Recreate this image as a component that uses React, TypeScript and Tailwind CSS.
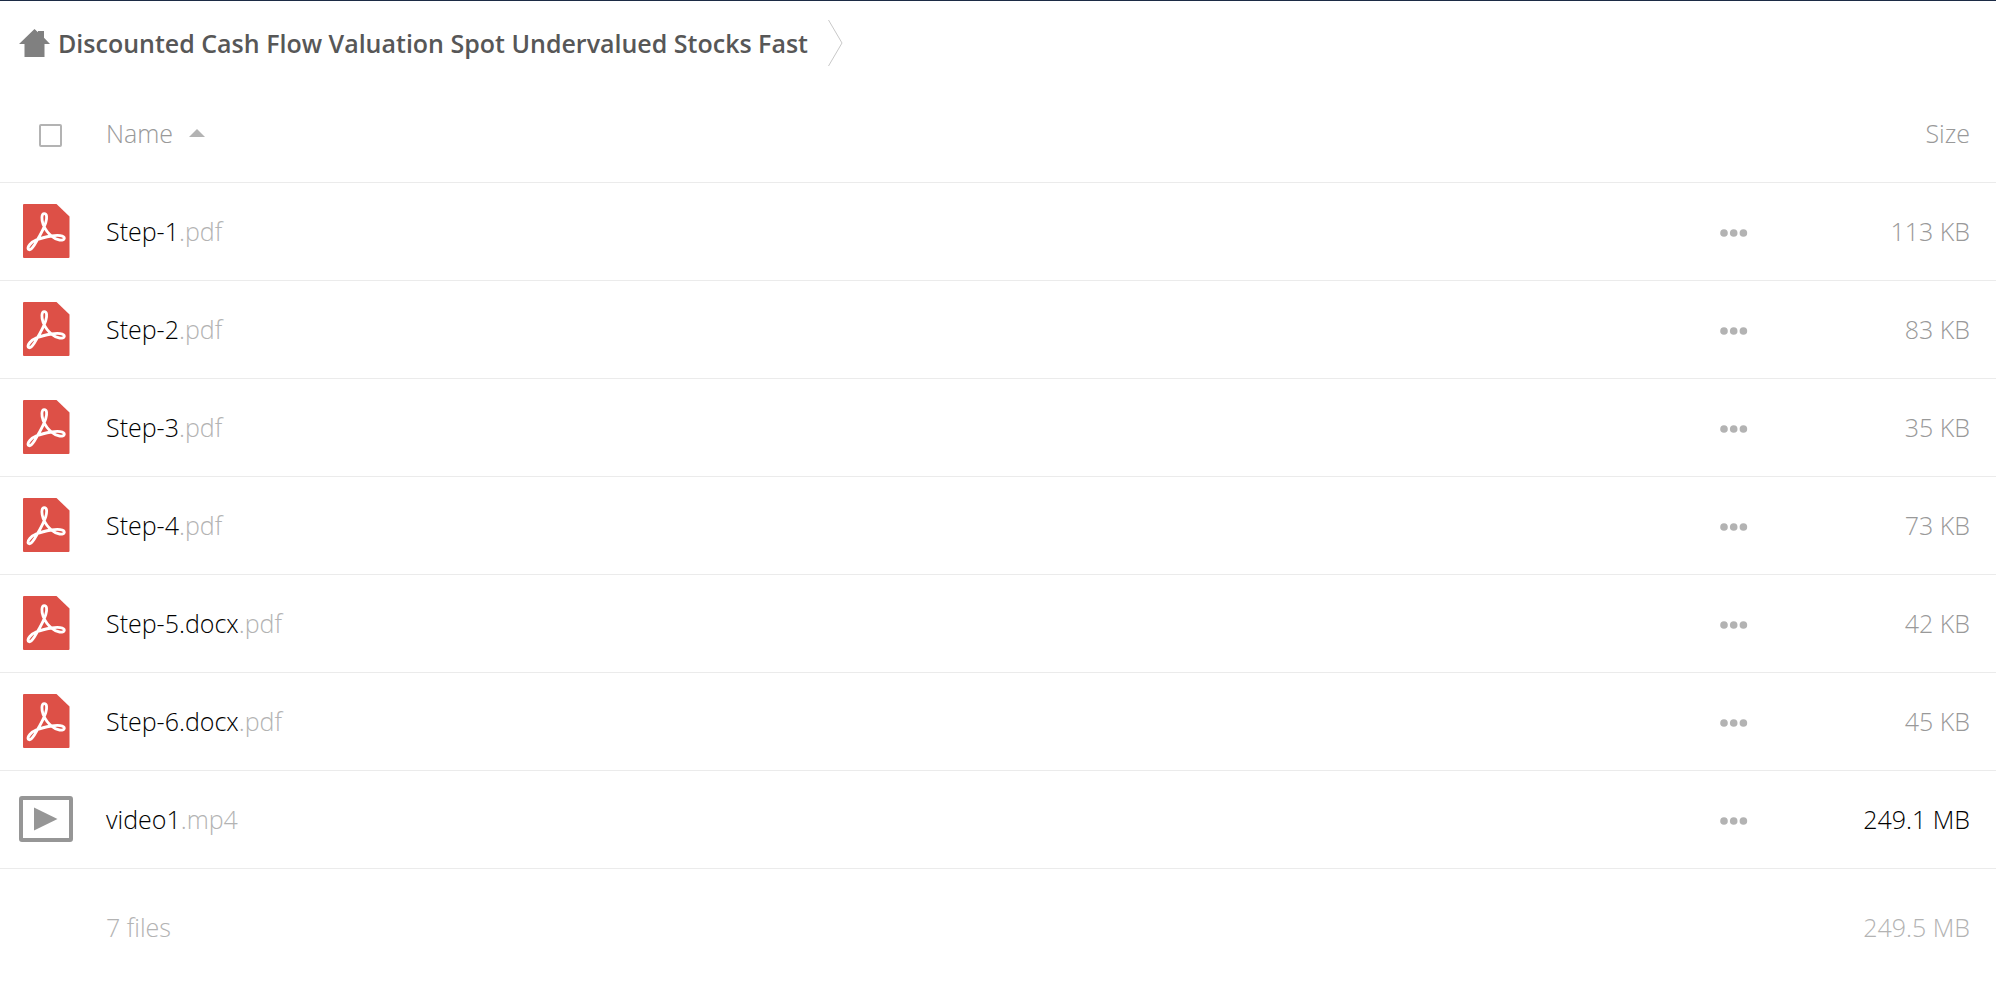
import { useState } from 'react'

type FileItem = {
  name: string
  ext: string
  size: string
  kind: 'pdf' | 'video'
}

const files: FileItem[] = [
  { name: 'Step-1', ext: '.pdf', size: '113 KB', kind: 'pdf' },
  { name: 'Step-2', ext: '.pdf', size: '83 KB', kind: 'pdf' },
  { name: 'Step-3', ext: '.pdf', size: '35 KB', kind: 'pdf' },
  { name: 'Step-4', ext: '.pdf', size: '73 KB', kind: 'pdf' },
  { name: 'Step-5.docx', ext: '.pdf', size: '42 KB', kind: 'pdf' },
  { name: 'Step-6.docx', ext: '.pdf', size: '45 KB', kind: 'pdf' },
  { name: 'video1', ext: '.mp4', size: '249.1 MB', kind: 'video' },
]

function PdfIcon() {
  return (
    <svg width="54" height="54" viewBox="0 0 54 54" aria-hidden="true">
      <path d="M5 0H37.500L50.500 12.500V53Q50.500 54 49.500 54H5Q4 54 4 53V1Q4 0 5 0Z" fill="#dd5047" />
      <path
        d="M25.200 9.700C22.400 9.700 22.300 15.500 24.200 20.500C26.300 25.700 30 30.300 33.500 32.800C37 36.300 45 37.300 45.300 34.300C45.400 31.300 38.500 31 32.500 32C27.500 32.800 22 34 17.500 35.800C12 38 8 43 9.300 45.300C11.500 47.300 15.300 41.500 17.800 36.800C21 31.500 25 24 26.800 18.500C28.200 13.500 28 9.700 25.200 9.700Z"
        fill="none"
        stroke="#fff"
        strokeWidth="2.800"
        strokeLinejoin="round"
      />
    </svg>
  )
}

function VideoIcon() {
  return (
    <svg width="54" height="54" viewBox="0 0 54 54" aria-hidden="true">
      <rect x="2" y="6" width="50" height="42" rx="1" fill="none" stroke="#969696" strokeWidth="4" />
      <path d="M15 15.500L38.500 27L15 38.500Z" fill="#969696" />
    </svg>
  )
}

export default function App() {
  const [allSelected, setAllSelected] = useState(false)
  const [ascending, setAscending] = useState(true)

  const rows = ascending ? files : [...files].reverse()

  return (
    <main className="min-h-screen border-t border-[#1c2b45] bg-white font-['Open_Sans',sans-serif] text-[25px] leading-9 font-light text-black">
      {/* Breadcrumb */}
      <nav className="flex h-[84px] items-center pl-[19px]">
        <a href="#" className="flex items-center gap-2 font-semibold text-[#575757]">
          <svg width="31" height="28" viewBox="0 0 31 28" fill="#808080" aria-hidden="true">
            <path d="M15.500 0L19 3.200V2H25V8.800L31 15H25.500V28H5.500V15H0Z" />
          </svg>
          <span>Discounted Cash Flow Valuation Spot Undervalued Stocks Fast</span>
        </a>
        <svg className="ml-5" width="15" height="48" viewBox="0 0 15 48" fill="none" stroke="#c8c8c8" aria-hidden="true">
          <path d="M0.500 1L14 24L0.500 47" />
        </svg>
      </nav>

      {/* File list */}
      <table className="w-full border-collapse">
        <thead>
          <tr className="h-[97px] border-b border-[#ebebeb] text-[#999]">
            <th className="w-[106px] pt-1 pl-[39px] text-left">
              <input
                type="checkbox"
                aria-label="Select all"
                checked={allSelected}
                onChange={(e) => setAllSelected(e.target.checked)}
                className="block size-[23px] appearance-none rounded-xs border-2 border-[#b3b3b3] checked:bg-[#b3b3b3]"
              />
            </th>
            <th className="text-left font-light">
              <button onClick={() => setAscending(!ascending)} className="flex items-center gap-4">
                Name
                <svg width="16" height="8" viewBox="0 0 16 8" fill="#b3b3b3" className={ascending ? '' : 'rotate-180'} aria-hidden="true">
                  <path d="M8 0L16 8H0Z" />
                </svg>
              </button>
            </th>
            <td className="w-16" />
            <th className="w-[212px] pr-[26px] text-right font-light">Size</th>
          </tr>
        </thead>
        <tbody>
          {rows.map((file) => (
            <tr key={file.name} className="h-[98px] border-b border-[#ebebeb]">
              <td className="pl-[19px] [&>svg]:block">
                {file.kind === 'pdf' ? <PdfIcon /> : <VideoIcon />}
              </td>
              <td>
                <a href="#">
                  {file.name}
                  <span className="text-[#b3b3b3]">{file.ext}</span>
                </a>
              </td>
              <td>
                <button aria-label={`More actions for ${file.name}`} className="flex h-9 items-center pt-1">
                  <svg width="28" height="8" viewBox="0 0 28 8" fill="#b3b3b3" aria-hidden="true">
                    <circle cx="4" cy="4" r="3.800" />
                    <circle cx="13.700" cy="4" r="3.800" />
                    <circle cx="23.400" cy="4" r="3.800" />
                  </svg>
                </button>
              </td>
              <td className={`pr-[26px] text-right ${file.kind === 'video' ? 'text-black' : 'text-[#999]'}`}>{file.size}</td>
            </tr>
          ))}
        </tbody>
        <tfoot>
          <tr className="h-[118px] text-[#b3b3b3]">
            <td />
            <td>{files.length} files</td>
            <td />
            <td className="pr-[26px] text-right">249.5 MB</td>
          </tr>
        </tfoot>
      </table>
    </main>
  )
}
